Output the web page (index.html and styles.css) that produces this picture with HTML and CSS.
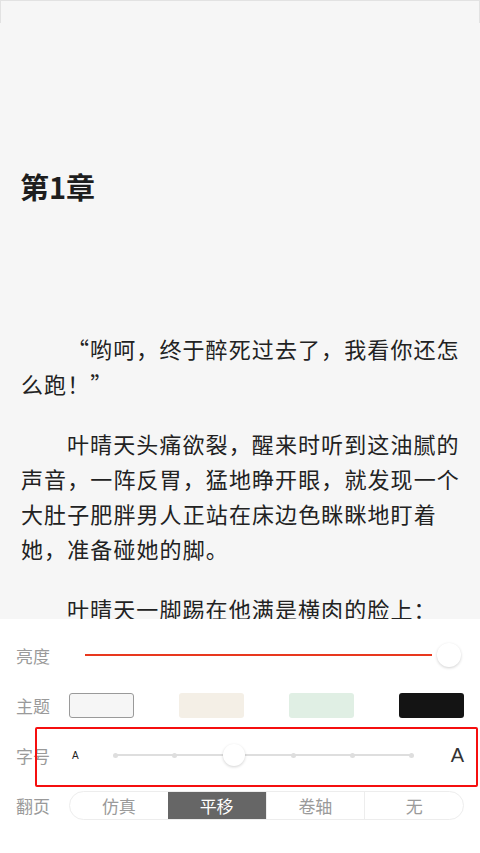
FILE: index.html
```html
<!DOCTYPE html>
<html lang="zh-CN">

<head>
	<meta charset="UTF-8">
	<title>第1章</title>

	<link rel="stylesheet" href="styles.css">
</head>

<body>
	<div class="reader">
		<div class="status"></div>
		<h1 class="chapter">第1章</h1>
		<p>“哟呵，终于醉死过去了，我看你还怎么跑！”</p>
		<p>叶晴天头痛欲裂，醒来时听到这油腻的声音，一阵反胃，猛地睁开眼，就发现一个大肚子肥胖男人正站在床边色眯眯地盯着她，准备碰她的脚。</p>
		<p>叶晴天一脚踢在他满是横肉的脸上：</p>
	</div>

	<div class="panel">
		<div class="row">
			<span class="label">亮度</span>
			<div class="bright">
				<div class="bright-line"></div>
				<div class="knob"></div>
			</div>
		</div>
		<div class="row">
			<span class="label">主题</span>
			<div class="themes">
				<span class="swatch swatch-white"></span>
				<span class="swatch swatch-beige"></span>
				<span class="swatch swatch-green"></span>
				<span class="swatch swatch-black"></span>
			</div>
		</div>
		<div class="row row-size">
			<span class="label">字号</span>
			<span class="a-small">A</span>
			<div class="size-track">
				<span class="dot"></span>
				<span class="dot"></span>
				<span class="dot"></span>
				<span class="dot"></span>
				<span class="dot"></span>
				<span class="dot"></span>
				<div class="knob size-knob"></div>
			</div>
			<span class="a-big">A</span>
			<!-- marco rojo de la captura -->
			<div class="highlight"></div>
		</div>
		<div class="row">
			<span class="label">翻页</span>
			<div class="modes">
				<span class="mode">仿真</span>
				<span class="mode active">平移</span>
				<span class="mode">卷轴</span>
				<span class="mode">无</span>
			</div>
		</div>
	</div>
</body>

</html>
```

FILE: styles.css
```css
html {
	font-family: "Noto Sans CJK SC", "Noto Sans", sans-serif;
	font-size: 16px;
}

body {
	margin: 0;
	width: 480px;
	height: 853px;
	overflow: hidden;
	background-color: #fff;
}

.reader {
	height: 619px;
	overflow: hidden;
	background-color: #f6f6f6;
	color: #222;
}

.status {
	height: 22px;
	border: 1px solid #e2e2e2;
	border-bottom: none;
}

.chapter {
	margin: 143px 0 0 20px;
	font-size: 29px;
	line-height: 40px;
	font-weight: bold;
	color: #1e1e1e;
}

.reader p {
	margin: 0 15px 25px 21px;
	font-size: 22px;
	line-height: 35px;
	letter-spacing: 1.1px;
	text-indent: 46px;
}

.chapter + p {
	margin-top: 125px;
}

.panel {
	height: 234px;
	padding-top: 11px;
	box-sizing: border-box;
	background-color: #fff;
}

.row {
	display: flex;
	align-items: center;
	height: 50px;
	padding: 0 16px;
}

.label {
	width: 53px;
	flex: none;
	font-size: 17px;
	color: #9a9a9a;
}

.bright {
	flex: 1;
	display: flex;
	align-items: center;
	padding-left: 16px;
}

.bright-line {
	flex: 1;
	height: 2px;
	background-color: #e8381e;
}

.knob {
	width: 24px;
	height: 24px;
	border-radius: 50%;
	background-color: #fff;
	box-shadow: 0 1px 3px rgba(0, 0, 0, .18);
}

.bright .knob {
	margin: 0 3px 0 5px;
}

.themes {
	flex: 1;
	display: flex;
	justify-content: space-between;
}

.swatch {
	width: 65px;
	height: 25px;
	border-radius: 3px;
	box-sizing: border-box;
}

.swatch-white {
	background-color: #f6f6f6;
	border: 1px solid #9a9a9a;
}

.swatch-beige {
	background-color: #f4efe6;
}

.swatch-green {
	background-color: #e0efe4;
}

.swatch-black {
	background-color: #141414;
}

.row-size {
	position: relative;
}

.a-small {
	width: 43px;
	padding-left: 3px;
	font-family: "Liberation Sans", sans-serif;
	font-size: 10px;
	color: #222;
}

.size-track {
	position: relative;
	flex: 1;
	display: flex;
	justify-content: space-between;
	align-items: center;
	margin: 0 -2px;
	height: 24px;
}

.size-track::before {
	content: "";
	position: absolute;
	left: 2px;
	right: 2px;
	top: 11px;
	height: 2px;
	background-color: #dedede;
}

.dot {
	position: relative;
	width: 5px;
	height: 5px;
	border-radius: 50%;
	background-color: #dedede;
}

.size-knob {
	position: absolute;
	top: 1px;
	left: calc(2px + (100% - 4px) * 0.4 - 11px);
	width: 22px;
	height: 22px;
}

.a-big {
	width: 52px;
	text-align: right;
	font-family: "Liberation Sans", sans-serif;
	font-size: 20px;
	color: #333;
}

.highlight {
	position: absolute;
	left: 35px;
	right: 2px;
	top: -3px;
	height: 60px;
	border: 2px solid #f50f0f;
	border-radius: 2px;
	box-sizing: border-box;
}

.modes {
	flex: 1;
	display: flex;
	height: 29px;
	border: 1px solid #ededed;
	border-radius: 15px;
	overflow: hidden;
	box-sizing: border-box;
}

.mode {
	flex: 1;
	display: flex;
	align-items: center;
	justify-content: center;
	font-size: 17px;
	color: #9a9a9a;
	border-left: 1px solid #ededed;
}

.mode:first-child {
	border-left: none;
}

.mode.active {
	background-color: #666;
	color: #fff;
	border-left: none;
}
```
